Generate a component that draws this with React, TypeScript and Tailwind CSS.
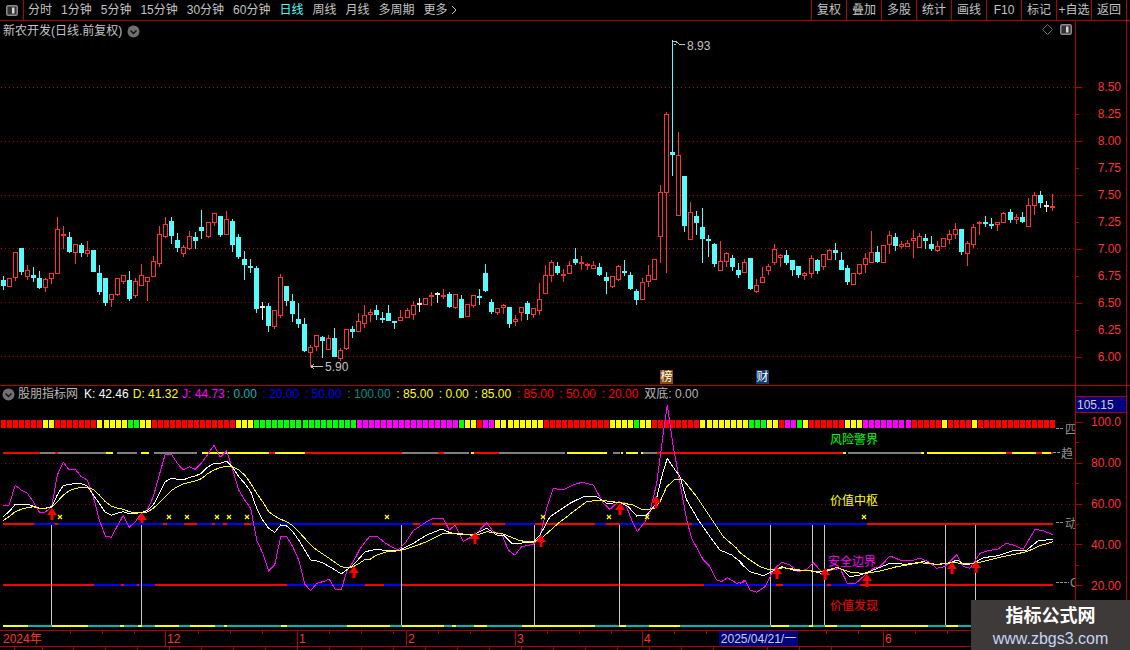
import React from 'react';

type Candle = [string, number, number, number, number];

// y in crop coordinates: first block is 190 + v / 3, second block 30 + v / 3
const CANDLES_A: Candle[] = [
  ['c',258,270,288,300],['r',264,265,290,290],['r',186,186,263,272],['c',174,174,246,255],['r',225,241,260,270],
  ['c',231,255,264,276],['c',243,264,294,297],['r',264,268,293,306],['r',250,250,266,282],['r',81,118,251,251],
  ['r',108,132,137,177],['c',126,141,186,190],['r',163,163,188,222],['c',159,165,189,201],['r',153,181,191,201],
  ['c',180,180,246,246],['c',225,249,306,315],['c',264,264,339,348],['r',313,313,329,351],['r',264,265,314,318],
  ['r',256,256,275,282],['c',243,270,327,333],['r',264,274,318,324],['r',222,256,287,288],['r',262,262,275,333],
  ['r',198,214,260,260],['r',108,133,221,231],['r',81,103,141,144],['c',81,93,138,162],['c',129,150,174,186],
  ['r',165,172,191,202],['r',123,139,177,180],['c',126,141,153,177],['c',60,111,123,147],['r',96,97,141,144],
  ['r',70,70,98,108],['c',78,78,135,141],['r',63,88,134,135],['c',87,93,165,186],['c',132,141,201,207],
  ['c',183,207,225,270],['c',207,229,234,249],['c',229,234,357,369],['w',336,348,351,390],['c',339,348,408,426],
  ['r',360,361,411,417],['r',252,262,378,384],['c',288,288,333,348],['c',312,333,372,396],['c',339,387,402,414],
  ['c',384,402,483,486],['r',465,472,488,530],['r',435,435,470,483],['c',438,441,453,504],['r',435,444,480,480],
  ['c',414,444,501,501],['r',474,481,507,513],['r',418,418,477,480],['c',408,418,426,444],['r',369,394,426,426],
  ['r',345,376,402,414],['r',357,367,376,396],['c',345,360,375,390],['c',366,384,388,399],['c',345,369,393,393],
  ['c',393,393,399,417],['r',360,382,393,393],['r',354,361,384,384],['r',333,346,375,390],['w',324,338,340,366],
  ['r',324,324,345,345],['r',306,316,319,348],['w',306,310,313,339],['r',297,316,321,327],['c',306,312,351,354],
  ['r',312,312,354,357],['c',315,327,384,384],['r',342,342,381,381],['r',315,315,348,354],['c',297,318,324,345],
  ['c',222,249,303,306],['c',327,336,366,372],['r',354,354,369,375],['r',342,345,354,372],['c',351,351,402,414],
  ['r',375,387,396,408],['r',351,351,369,393],['c',333,339,372,390],['r',354,354,375,384],['r',279,327,363,375],
  ['r',225,255,312,312],['r',210,216,258,276],['c',216,228,249,255],['r',237,252,258,276],['r',213,225,252,252],
  ['c',174,207,219,225],['r',198,216,220,240],['r',219,222,228,240],['r',213,225,237,237],['c',219,231,255,258],
  ['c',246,261,273,312],['r',258,258,291,294],['r',225,228,270,273],['c',210,243,248,258],['c',246,255,297,300],
  ['c',297,303,330,345],['r',264,276,330,330],['r',225,255,276,291],['r',208,208,270,270],
];

const CANDLES_B: Candle[] = [
  ['r',465,487,620,698],['r',247,253,488,728],['c',30,366,374,438],['r',306,376,557,557],['c',438,438,587,605],
  ['r',516,547,629,629],['c',543,558,579,615],['c',534,591,627,698],['c',615,627,633,680],['c',640,642,702,711],
  ['r',633,694,722,722],['r',666,670,695,711],['c',675,684,711,723],['c',699,720,735,744],['r',687,697,728,728],
  ['c',684,684,777,780],['r',747,766,785,789],['r',711,742,758,758],['r',702,708,724,735],['r',642,657,698,705],
  ['r',672,676,685,711],['c',660,675,699,705],['c',690,690,720,738],['c',708,708,735,744],['r',726,730,739,750],
  ['r',675,684,731,744],['c',687,690,723,732],['r',672,673,710,720],['r',657,660,689,690],['c',639,660,669,690],
  ['c',666,690,720,720],['c',705,714,756,765],['r',729,730,764,765],['r',702,703,732,735],['r',670,685,704,729],
  ['r',603,667,698,698],['c',648,666,696,699],['r',646,646,698,698],['r',603,616,646,672],['c',609,621,648,663],
  ['r',633,643,651,657],['r',630,640,650,650],['r',600,625,632,684],['r',609,619,654,654],['c',612,624,633,657],
  ['c',618,642,657,663],['r',632,649,663,666],['r',624,624,650,650],['r',600,613,629,642],['r',579,598,614,627],
  ['c',597,597,666,675],['r',633,639,671,708],['r',582,592,644,654],['r',573,576,581,615],['c',558,576,582,591],
  ['c',564,582,588,597],['r',577,577,586,603],['r',546,549,578,578],['c',537,546,570,579],['r',552,562,571,582],
  ['c',546,561,576,579],['r',504,526,590,590],['r',486,495,527,555],['c',483,495,519,534],['w',513,525,528,546],
  ['r',492,528,534,543],
];

const COLORS: Record<string, string> = { r: '#ff3232', c: '#54fcfc', w: '#e8e8e8' };

function CandleMark({ c, i, base }: { c: Candle; i: number; base: number }) {
  const x = Math.floor(3 + 6.03 * i);
  const [kind, hi, top, bot, lo] = c;
  const yHi = Math.round(base + hi / 3);
  const yTop = Math.round(base + top / 3);
  const yBot = Math.round(base + bot / 3);
  const yLo = Math.round(base + lo / 3);
  const color = COLORS[kind];
  const flat = yBot - yTop <= 2 || kind === 'c' || kind === 'w';
  return (
    <g>
      <rect x={x} y={yHi} width={1} height={Math.max(yLo - yHi, 1)} fill={color} />
      {flat ? (
        <rect x={x - 2} y={yTop} width={5} height={Math.max(yBot - yTop, 2)} fill={color} />
      ) : (
        <rect x={x - 1.5} y={yTop + 0.5} width={4} height={yBot - yTop - 1} fill="#000" stroke={color} />
      )}
    </g>
  );
}

type Pts = [number, number][];
const toPath = (groups: [number, Pts][]) =>
  groups
    .flatMap(([off, pts]) => pts.map(([x, y]) => `${(off + x / 3).toFixed(1)},${(380 + y / 3).toFixed(1)}`))
    .join(' ');

const J = toPath([
  [0, [[9,378],[27,375],[46,316],[64,330],[82,340],[100,365],[118,396],[136,396],[155,380],[172,285],[190,247],[208,270],[226,268],[244,290],[262,300],[280,350],[298,420],[316,468],[334,472],[352,438],[370,406],[388,442],[406,425],[424,400],[442,390],[460,350],[478,285],[496,222],[514,222],[532,250],[550,270],[568,260],[586,268],[604,250],[622,225],[642,196],[660,232],[680,213],[698,270],[716,330],[734,360],[752,385],[770,480],[788,520],[806,572],[824,555],[842,470],[860,470],[878,500],[896,540],[914,612],[932,632],[950,610],[968,605],[988,598],[1006,628],[1024,628],[1042,570],[1060,545],[1078,510],[1096,485]]],
  [370, [[0,468],[20,468],[40,485],[60,498],[85,510],[105,490],[130,452],[170,425],[190,415],[220,415],[238,450],[255,435],[280,484],[315,465],[350,428],[370,455],[395,462],[415,510],[435,525],[455,500],[490,493],[510,470],[530,385],[550,325],[580,330],[610,315],[635,307],[670,315],[700,370],[720,388],[745,365],[765,368],[785,420],[802,455],[825,425],[840,395],[860,310],[880,160],[892,75],[910,200],[930,310],[950,420],[965,475],[1000,540],[1020,560],[1040,600],[1055,605],[1072,593],[1100,610],[1125,605]]],
  [740, [[0,610],[15,600],[30,630],[50,637],[75,620],[100,570],[125,547],[150,555],[175,575],[200,568],[220,548],[245,575],[275,570],[300,565],[322,610],[345,612],[375,585],[400,565],[420,560],[450,528],[480,540],[510,543],[540,535],[565,545],[590,565],[615,560],[650,525],[670,560],[690,565],[720,520],[745,512],[775,507],[798,490],[820,495],[850,508],[885,448],[910,452],[940,465]]],
]);

const K = toPath([
  [0, [[9,410],[27,395],[46,373],[64,372],[82,372],[100,378],[118,385],[136,385],[155,380],[172,345],[190,316],[208,314],[226,310],[244,311],[262,318],[280,345],[298,370],[316,397],[334,406],[352,400],[370,395],[388,402],[406,400],[424,398],[442,392],[460,375],[478,340],[496,305],[514,295],[532,298],[550,300],[568,292],[586,288],[604,280],[622,262],[642,250],[660,250],[680,243],[698,262],[716,290],[734,310],[752,335],[770,385],[788,420],[806,445],[824,457],[842,435],[860,438],[878,455],[896,480],[914,510],[932,540],[950,543],[968,548],[988,560],[1006,570],[1024,582],[1042,568],[1060,555],[1078,535],[1096,515]]],
  [370, [[0,512],[20,508],[50,512],[90,510],[130,490],[170,465],[215,447],[240,458],[280,465],[315,462],[350,445],[380,465],[400,465],[425,490],[450,490],[490,485],[510,465],[540,410],[570,390],[600,370],[640,350],[680,350],[710,370],[750,368],[775,380],[800,408],[830,405],[855,375],[875,290],[892,235],[910,262],[930,290],[950,360],[985,420],[1020,470],[1050,510],[1085,525],[1120,552]]],
  [740, [[0,548],[30,575],[70,587],[95,575],[125,560],[160,570],[200,570],[245,580],[290,562],[310,570],[330,590],[360,585],[400,570],[450,550],[500,553],[550,545],[590,555],[630,548],[652,540],[675,555],[700,550],[730,533],[775,527],[820,512],[860,510],[895,482],[940,478]]],
]);

const D = toPath([
  [0, [[9,422],[27,410],[46,395],[64,388],[82,383],[100,380],[118,385],[136,385],[155,382],[172,365],[190,345],[208,332],[226,326],[244,322],[262,322],[280,328],[298,345],[316,365],[334,378],[352,384],[370,388],[388,395],[406,398],[424,398],[442,396],[460,385],[478,368],[496,350],[514,332],[532,320],[550,312],[568,307],[586,303],[604,296],[622,282],[642,270],[660,263],[680,258],[698,260],[716,270],[734,285],[752,310],[770,340],[788,365],[806,395],[824,408],[842,418],[860,425],[878,437],[896,455],[914,475],[932,495],[950,510],[968,522],[988,535],[1006,548],[1024,560],[1042,563],[1060,560],[1078,550],[1096,538]]],
  [370, [[0,538],[20,525],[50,515],[90,512],[130,500],[170,485],[215,462],[265,460],[315,467],[350,455],[400,462],[450,482],[490,487],[520,470],[565,430],[610,395],[650,365],[690,360],[750,368],[790,375],[820,390],[855,385],[870,365],[890,320],[915,298],[940,300],[980,350],[1020,410],[1060,470],[1100,505]]],
  [740, [[0,518],[30,540],[60,560],[90,570],[130,563],[180,570],[240,575],[290,563],[335,578],[380,580],[420,573],[470,560],[540,548],[590,553],[640,548],[700,552],[780,532],[860,515],[900,497],[940,485]]],
]);

const R = '#ff0000', B = '#0000ff', G = '#808080', Y = '#ffff00', T = '#00b4b4';
type Seg = [number, number, string];
const shift = (off: number, segs: Seg[]): Seg[] => segs.map(([a, b, c]) => [off + a / 3, off + b / 3, c]);

const LINE_85: Seg[] = [
  ...shift(0, [[9,120,R],[120,165,G],[165,175,R],[175,318,G],[318,340,Y],[352,410,G],[424,448,Y],[462,592,G],[606,806,Y],[806,825,R],[825,915,Y],[915,1110,R]]),
  ...shift(370, [[0,95,R],[95,203,G],[203,222,R],[222,297,G],[303,313,Y],[313,387,R],[387,585,G],[592,712,Y],[728,750,G],[752,760,Y],[767,805,Y],[812,820,Y],[820,860,G],[860,1110,R]]),
  ...shift(740, [[0,310,R],[310,318,Y],[325,543,G],[543,552,Y],[562,797,Y],[797,815,R],[815,887,Y],[887,905,R],[905,932,Y],[932,940,R]]),
];

const LINE_50: Seg[] = [
  ...shift(0, [[9,102,R],[102,165,B],[165,175,R],[175,490,B],[490,500,R],[500,552,B],[552,590,R],[590,635,B],[635,645,R],[645,670,B],[670,680,R],[680,732,B],[732,752,R],[752,1110,B]]),
  ...shift(370, [[0,130,B],[130,150,R],[150,185,B],[185,405,R],[405,495,B],[495,675,R],[675,708,B],[708,750,R],[750,820,B],[820,965,R],[965,1110,B]]),
  ...shift(740, [[0,380,B],[380,940,R]]),
];

const LINE_20: Seg[] = [
  ...shift(0, [[9,282,R],[282,362,B],[362,372,R],[372,410,B],[410,416,R],[416,465,B],[465,862,R],[862,1096,B],[1096,1110,R]]),
  ...shift(370, [[0,42,R],[42,95,B],[95,1002,R],[1002,1110,B]]),
  ...shift(740, [[0,108,B],[108,130,R],[130,262,B],[262,272,R],[272,360,B],[360,940,R]]),
];

const LINE_0: Seg[] = [
  [3, 1053, T],
  ...shift(0, [[9,84,Y],[155,264,Y],[360,372,Y],[414,426,Y],[464,537,Y],[570,645,Y],[672,682,Y],[842,862,Y],[1042,1110,Y]]),
  ...shift(370, [[0,60,Y],[95,222,Y],[247,258,Y],[313,351,Y],[457,675,Y],[748,768,Y],[838,930,Y]]),
  ...shift(740, [[92,147,Y],[208,218,Y],[254,291,Y],[362,564,Y],[617,654,Y]]),
];

const HEAT: [string, number][] = [
  ['r',7],['y',2],['r',7],['y',5],['g',2],['y',2],['r',14],['y',3],['g',17],['m',17],['g',1],['y',2],['r',1],['m',2],
  ['y',8],['r',11],['y',1],['y',3],['g',1],['y',2],['r',8],['y',8],['g',3],['y',2],['r',1],['m',2],['g',1],['y',1],
  ['r',6],['y',3],['m',8],['r',5],['y',1],['r',4],['y',1],['r',13],
];
const HEAT_COLORS: Record<string, string> = { r: '#ff0000', y: '#ffff00', g: '#00ff00', m: '#ff00ff' };
const heatCells = HEAT.flatMap(([c, n]) => Array.from({ length: n }, () => HEAT_COLORS[c]));

const WHITE_LINES = [51, 141, 401, 534, 619, 770, 812, 824, 945, 975];
const ARROWS: [number, number, number][] = [
  [52,508,520],[142,513,523],[354,566,578],[475,532,544],[541,535,547],[620,503,515],[656,496,508],
  [777,567,579],[825,568,580],[867,574,587],[952,562,574],[976,561,573],
];
const X_MARKS = [60, 169, 187, 217, 229, 247, 387, 543, 609, 647, 864];

const PRICES = ['8.50', '8.25', '8.00', '7.75', '7.50', '7.25', '7.00', '6.75', '6.50', '6.25', '6.00'];
const SCALE = ['100.0', '80.00', '60.00', '40.00', '20.00'];
const LEFT_TABS = ['分时', '1分钟', '5分钟', '15分钟', '30分钟', '60分钟', '日线', '周线', '月线', '多周期', '更多'];
const RIGHT_TABS = ['复权', '叠加', '多股', '统计', '画线', 'F10', '标记', '+自选', '返回'];

const VALUES: [string, string][] = [
  [': 0.00', 'text-[#00b4b4]'], [': 20.00', 'text-[#0000ff]'], [': 50.00', 'text-[#0000ff]'], [': 100.00', 'text-[#008c8c]'],
  [': 85.00', 'text-[#ffff00]'], [': 0.00', 'text-[#ffff00]'], [': 85.00', 'text-[#ffff00]'],
  [': 85.00', 'text-[#ff0000]'], [': 50.00', 'text-[#ff0000]'], [': 20.00', 'text-[#ff0000]'],
];

const PanelIcon = () => (
  <svg width="12" height="11" viewBox="0 0 12 11">
    <rect x="0.75" y="0.75" width="10.5" height="9.5" rx="1.5" fill="#333" stroke="#8c8c8c" strokeWidth="1.5" />
    <rect x="6" y="2.5" width="2.5" height="6" fill="#d8d8d8" />
  </svg>
);

const RoundChevron = () => (
  <svg width="13" height="13" viewBox="0 0 13 13">
    <circle cx="6.5" cy="6.5" r="6" fill="#707070" />
    <path d="M3.5 5.5 L6.5 8.5 L9.5 5.5" fill="none" stroke="#111" strokeWidth="1.4" />
  </svg>
);

function Toolbar() {
  return (
    <div className="flex h-[21px] shrink-0 items-stretch border-b border-[#b00000] pr-[3px] text-[12px] text-[#c4c4c4]">
      <div className="flex w-[24px] items-center justify-center border-r border-[#b00000]">
        <PanelIcon />
      </div>
      <div className="flex items-center gap-[9px] pl-[4px]">
        {LEFT_TABS.map(t => (
          <span key={t} className={t === '日线' ? 'text-[#54fcfc]' : ''}>{t}</span>
        ))}
        <svg width="6" height="10" viewBox="0 0 6 10" className="-ml-[6px]">
          <path d="M1 1 L5 5 L1 9" fill="none" stroke="#c4c4c4" />
        </svg>
      </div>
      <div className="flex-1" />
      {RIGHT_TABS.map(t => (
        <div key={t} className="flex w-[35px] items-center justify-center whitespace-nowrap border-l border-[#b00000]">{t}</div>
      ))}
      <div className="w-px bg-[#b00000]" />
    </div>
  );
}

function PriceChart() {
  return (
    <div className="relative w-[1076px] border-r border-[#b00000]">
      <svg width="1075" height="364" viewBox="0 21 1075 364" className="block" shapeRendering="crispEdges">
        {[87, 141, 195, 248, 302, 356].map(y => (
          <line key={y} x1="1" x2="1075" y1={y + 0.5} y2={y + 0.5} stroke="#b00000" strokeDasharray="1 3" />
        ))}
        {CANDLES_A.map((c, i) => <CandleMark key={i} c={c} i={i} base={190} />)}
        {CANDLES_B.map((c, i) => <CandleMark key={i} c={c} i={i + CANDLES_A.length} base={30} />)}
        <path d="M673 41.5 H676 M674 44.5 H676 M676 41.5 L680 44.5 H685" fill="none" stroke="#c4c4c4" />
        <path d="M311 366.5 H323 M311 366.5 L314 364 M311 366.5 L314 369" fill="none" stroke="#c4c4c4" />
      </svg>

      <div className="absolute left-[3px] top-[2px] flex items-center gap-[5px] text-[12px] leading-4 text-[#c4c4c4]">
        <span>新农开发(日线.前复权)</span>
        <RoundChevron />
      </div>
      <svg width="32" height="12" viewBox="0 0 32 12" className="absolute left-[1042px] top-[3px]">
        <path d="M5.5 0.5 L10.5 5.5 L5.5 10.5 L0.5 5.5 Z" fill="none" stroke="#707070" />
        <rect x="18.75" y="0.75" width="10.5" height="9.5" rx="1.5" fill="#333" stroke="#8c8c8c" strokeWidth="1.5" />
        <rect x="24" y="2.5" width="2.5" height="6" fill="#d8d8d8" />
      </svg>
      <span className="absolute left-[687px] top-[17px] text-[12px] leading-4 text-[#c4c4c4]">8.93</span>
      <span className="absolute left-[325px] top-[338px] text-[12px] leading-4 text-[#c4c4c4]">5.90</span>
      <span className="absolute left-[660px] top-[349px] flex h-[14px] w-[13px] items-center justify-center bg-[#8a4a0a] text-[12px] text-white">榜</span>
      <span className="absolute left-[756px] top-[349px] flex h-[14px] w-[13px] items-center justify-center bg-[#103a70] text-[12px] text-white">财</span>
    </div>
  );
}

function PriceAxis() {
  return (
    <div className="relative flex w-[51px] flex-col items-end border-r border-[#b00000] pr-[5px] pt-[52px] text-[12px] text-[#ff3232]">
      <svg width="6" height="364" viewBox="0 21 6 364" className="absolute left-0 top-0" shapeRendering="crispEdges">
        {PRICES.map((p, i) => (
          <rect key={p} x="0" y={87 + i * 27} width={i % 2 === 0 ? 6 : 3} height="1" fill="#b00000" />
        ))}
      </svg>
      {PRICES.map(p => (
        <span key={p} className="flex h-[27px] items-center">{p}</span>
      ))}
    </div>
  );
}

function SegLine({ segs, y }: { segs: Seg[]; y: number }) {
  return (
    <g>
      {segs.map(([a, b, c], i) => (
        <rect key={i} x={a} y={y} width={b - a} height={2} fill={c} />
      ))}
    </g>
  );
}

function IndicatorChart() {
  return (
    <div className="relative w-[1076px] overflow-hidden border-r border-[#b00000]">
      <svg width="1075" height="244" viewBox="0 386 1075 244" className="block">
        <g shapeRendering="crispEdges">
          {[422, 463, 504, 544].map(y => (
            <line key={y} x1="1" x2="1075" y1={y + 0.5} y2={y + 0.5} stroke="#8c0000" strokeDasharray="1 3" />
          ))}
          {heatCells.map((c, i) => (
            <rect key={i} x={Math.round(1 + 6.03 * i)} y={420} width={5} height={8} fill={c} />
          ))}
          <SegLine segs={LINE_85} y={452} />
          <SegLine segs={LINE_50} y={523} />
          <SegLine segs={LINE_20} y={584} />
          <SegLine segs={LINE_0} y={625} />
          {WHITE_LINES.map(x => (
            <rect key={x} x={x} y={525} width={1} height={100} fill="#c8c8c8" />
          ))}
          {[428, 452, 522, 582].map((y, i) => (
            <line key={y} x1={i === 1 ? 1053 : 1056} x2={[1064, 1060, 1064, 1069][i]} y1={y + 0.5} y2={y + 0.5} stroke="#909090" strokeDasharray="3 1" />
          ))}
          <polyline points={J} fill="none" stroke="#ff00ff" strokeWidth="1" />
          <polyline points={K} fill="none" stroke="#ffffff" strokeWidth="1" />
          <polyline points={D} fill="none" stroke="#ffff00" strokeWidth="1" />
        </g>
        {X_MARKS.map(x => (
          <path key={x} d={`M${x - 2} ${515} L${x + 2} ${519} M${x + 2} ${515} L${x - 2} ${519}`} stroke="#ffff00" strokeWidth="1.2" />
        ))}
        {ARROWS.map(([x, top, bot]) => (
          <path key={x} d={`M${x} ${top} L${x + 5} ${top + 7} L${x + 1.5} ${top + 7} L${x + 1.5} ${bot} L${x - 1.5} ${bot} L${x - 1.5} ${top + 7} L${x - 5} ${top + 7} Z`} fill="#ff0000" />
        ))}
      </svg>

      <div className="absolute left-[2px] top-0 flex h-4 items-center whitespace-nowrap text-[12px] leading-4">
        <RoundChevron />
        <span className="ml-[3px] text-[#b8b8b8]">股朋指标网</span>
        <span className="ml-[6px] text-white">K: 42.46</span>
        <span className="ml-[4px] text-[#ffff00]">D: 41.32</span>
        <span className="ml-[4px] text-[#ff00ff]">J: 44.73</span>
        <div className="ml-[2px] flex gap-[5.7px]">
          {VALUES.map(([v, c], i) => (
            <span key={i} className={c}>{v}</span>
          ))}
        </div>
        <span className="ml-[6px] text-[#b8b8b8]">双底: 0.00</span>
      </div>

      <span className="absolute left-[830px] top-[46px] text-[12px] leading-4 text-[#00ff00]">风险警界</span>
      <span className="absolute left-[830px] top-[107px] text-[12px] leading-4 text-[#ffff00]">价值中枢</span>
      <span className="absolute left-[828px] top-[168px] text-[12px] leading-4 text-[#ff00ff]">安全边界</span>
      <span className="absolute left-[830px] top-[212px] text-[12px] leading-4 text-[#ff0000]">价值发现</span>

      <span className="absolute left-[1065px] top-[36px] text-[12px] leading-4 text-[#909090]">四</span>
      <span className="absolute left-[1061px] top-[60px] text-[12px] leading-4 text-[#909090]">趋</span>
      <span className="absolute left-[1065px] top-[130px] text-[12px] leading-4 text-[#909090]">动</span>
      <span className="absolute left-[1070px] top-[189px] text-[12px] leading-4 text-[#909090]">C</span>
    </div>
  );
}

function IndicatorAxis() {
  return (
    <div className="relative flex w-[51px] flex-col items-end border-r border-[#b00000] pr-[5px] pt-[16px] text-[12px] text-[#ff3232]">
      <svg width="6" height="244" viewBox="0 386 6 244" className="absolute left-0 top-0" shapeRendering="crispEdges">
        {Array.from({ length: 11 }, (_, i) => (
          <rect key={i} x="0" y={422 + i * 20.4} width={i % 2 === 0 ? 6 : 3} height="1" fill="#b00000" />
        ))}
      </svg>
      <div className="absolute left-0 top-[10px] flex h-[17px] w-[50px] items-center border-y border-[#b00000] bg-[#000080] pl-[1px] text-[12px] text-[#d0d0d0]">105.15</div>
      {SCALE.map(s => (
        <span key={s} className="flex h-[40.8px] items-center">{s}</span>
      ))}
    </div>
  );
}

const DATE_MAJOR = [165, 297, 406, 515, 642, 883];
const DATE_MINOR = [70, 102, 134, 198, 230, 262, 329, 361, 393, 438, 470, 547, 579, 611, 674, 706, 826, 858, 915, 947, 979];
const BOTTOM_TICKS = [14, 42, 73, 105, 137, 169, 201, 233, 265, 297, 329, 361, 393, 425, 457, 489, 521, 553, 585, 617, 649, 681, 713, 767, 799, 831];

function DateRow() {
  return (
    <div className="relative h-4 shrink-0 border-t border-[#b00000] text-[12px] leading-[16px] text-[#ff3232]">
      <svg width="1076" height="16" viewBox="0 0 1076 16" className="absolute left-0 top-0" shapeRendering="crispEdges">
        {DATE_MAJOR.map(x => <rect key={x} x={x} y="0" width="1" height="15" fill="#b00000" />)}
        {DATE_MINOR.map(x => <rect key={x} x={x} y="0" width="1" height="3" fill="#b00000" />)}
        <rect x="1075" y="0" width="1" height="16" fill="#b00000" />
      </svg>
      <span className="absolute left-[3px]">2024年</span>
      <span className="absolute left-[167px]">12</span>
      <span className="absolute left-[299px]">1</span>
      <span className="absolute left-[408px]">2</span>
      <span className="absolute left-[517px]">3</span>
      <span className="absolute left-[644px]">4</span>
      <span className="absolute left-[719px] h-[15px] w-[79px] bg-[#000080] text-center text-[#d0d0d0]">2025/04/21/一</span>
      <span className="absolute left-[885px]">6</span>
    </div>
  );
}

export default function App() {
  return (
    <div
      className="relative flex h-[650px] w-[1130px] flex-col overflow-hidden bg-black"
      style={{ fontFamily: '"Liberation Sans", "Noto Sans CJK SC", sans-serif' }}
    >
      <Toolbar />
      <div className="flex h-[365px] shrink-0 border-b border-[#b00000]">
        <PriceChart />
        <PriceAxis />
      </div>
      <div className="flex h-[244px] shrink-0">
        <IndicatorChart />
        <IndicatorAxis />
      </div>
      <DateRow />
      <div className="h-[4px] shrink-0 border-t border-[#b00000]">
        <svg width="1076" height="3" viewBox="0 0 1076 3" className="block" shapeRendering="crispEdges">
          {BOTTOM_TICKS.map(x => <rect key={x} x={x} y="0" width="1" height="3" fill="#b00000" />)}
        </svg>
      </div>

      <div className="absolute left-[971px] top-[600px] flex h-[50px] w-[159px] flex-col items-center bg-[#3e3a3a]">
        <span className="mt-[4px] text-[18px] font-bold leading-[24px] text-white">指标公式网</span>
        <span className="mt-[1px] text-[16px] leading-[20px] text-[#c4d6f4]">www.zbgs3.com</span>
      </div>
    </div>
  );
}
